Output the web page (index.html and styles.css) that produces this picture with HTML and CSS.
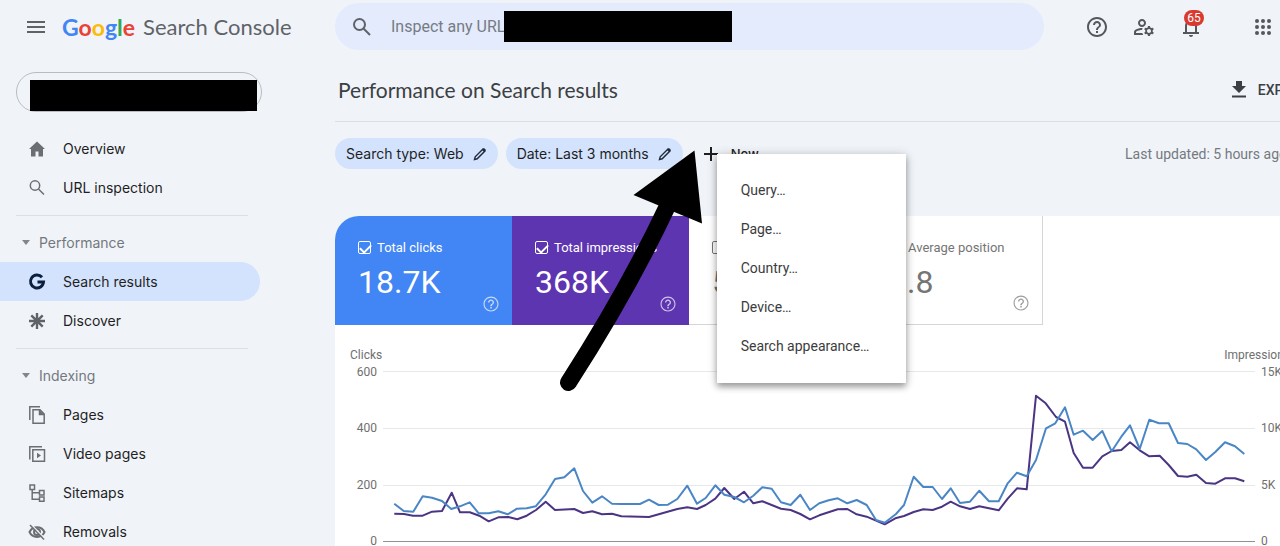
FILE: index.html
```html
<!DOCTYPE html>
<html lang="en">
<head>
    <meta charset="UTF-8">
    <meta name="viewport" content="width=device-width, initial-scale=1.0">
    <title>Performance on Search results</title>
    <link rel="stylesheet" href="styles.css">
</head>
<body>
    <header class="topbar">
        <div class="brand">
            <button class="icon-btn menu-btn" aria-label="Main menu">
                <svg width="18" height="12" viewBox="0 0 18 12"><path d="M0 1h18M0 6h18M0 11h18" stroke="#5f6368" stroke-width="2"/></svg>
            </button>
            <a class="logo" href="#"><span class="google"><span class="blue">G</span><span class="red">o</span><span class="yellow">o</span><span class="blue">g</span><span class="green">l</span><span class="red">e</span></span> <span class="product">Search Console</span></a>
        </div>

        <form class="search">
            <svg width="20" height="20" viewBox="0 0 20 20" fill="none" stroke="#5f6368" stroke-width="2"><circle cx="7.5" cy="7.5" r="5.5"/><path d="M11.5 11.5L18 18"/></svg>
            <input type="text" placeholder="Inspect any URL" aria-label="Inspect any URL">
            <span class="redacted"></span>
        </form>

        <div class="actions">
            <button class="icon-btn" aria-label="Help">
                <svg width="24" height="24" viewBox="0 0 24 24" fill="#54585d"><path d="M11 18h2v-2h-2v2zm1-16C6.48 2 2 6.48 2 12s4.48 10 10 10 10-4.48 10-10S17.52 2 12 2zm0 18c-4.41 0-8-3.59-8-8s3.59-8 8-8 8 3.59 8 8-3.59 8-8 8zm0-14c-2.21 0-4 1.79-4 4h2c0-1.1.9-2 2-2s2 .9 2 2c0 2-3 1.75-3 5h2c0-2.25 3-2.5 3-5 0-2.21-1.79-4-4-4z"/></svg>
            </button>
            <button class="icon-btn" aria-label="User settings">
                <svg width="24" height="24" viewBox="0 0 24 24" fill="#54585d"><path d="M4 18v-.65c0-.34.16-.66.41-.81C6.1 15.53 8.03 15 10 15c.03 0 .05 0 .08.01.1-.7.3-1.37.59-1.98-.22-.02-.44-.03-.67-.03-2.42 0-4.68.67-6.61 1.82-.88.52-1.39 1.5-1.39 2.53V20h9.26c-.42-.6-.75-1.28-.97-2H4zM10 12c2.21 0 4-1.79 4-4s-1.79-4-4-4-4 1.79-4 4 1.79 4 4 4zm0-6c1.1 0 2 .9 2 2s-.9 2-2 2-2-.9-2-2 .9-2 2-2zM20.75 16c0-.22-.03-.42-.06-.63l1.14-1.01-1-1.73-1.45.49c-.32-.27-.68-.48-1.08-.63L18 11h-2l-.3 1.49c-.4.15-.76.36-1.08.63l-1.45-.49-1 1.73 1.14 1.01c-.03.21-.06.41-.06.63s.03.42.06.63l-1.14 1.01 1 1.73 1.45-.49c.32.27.68.48 1.08.63L16 21h2l.3-1.49c.4-.15.76-.36 1.08-.63l1.45.49 1-1.73-1.14-1.01c.03-.21.06-.41.06-.63zM17 18c-1.1 0-2-.9-2-2s.9-2 2-2 2 .9 2 2-.9 2-2 2z"/></svg>
            </button>
            <button class="icon-btn bell" aria-label="Notifications">
                <svg width="24" height="24" viewBox="0 0 24 24" fill="#54585d"><path d="M12 22c1.1 0 2-.9 2-2h-4c0 1.1.9 2 2 2zm6-5v-6c0-3.07-1.63-5.64-4.5-6.32V4c0-.83-.67-1.5-1.5-1.5s-1.5.67-1.5 1.5v.68C7.64 5.36 6 7.92 6 11v6H4v2h16v-2h-2zm-2 0H8v-6c0-2.48 1.51-4.5 4-4.5s4 2.02 4 4.5v6z"/></svg>
                <span class="badge">65</span>
            </button>
            <button class="icon-btn apps" aria-label="Google apps">
                <svg width="16" height="16" viewBox="0 0 16 16" fill="#54585d"><circle cx="2" cy="2" r="2"/><circle cx="8" cy="2" r="2"/><circle cx="14" cy="2" r="2"/><circle cx="2" cy="8" r="2"/><circle cx="8" cy="8" r="2"/><circle cx="14" cy="8" r="2"/><circle cx="2" cy="14" r="2"/><circle cx="8" cy="14" r="2"/><circle cx="14" cy="14" r="2"/></svg>
            </button>
        </div>
    </header>

    <div class="layout">
        <aside class="sidebar">
            <button class="property" aria-label="Property"><span class="redacted"></span></button>

            <nav>
                <a class="nav-item" href="#">
                    <svg viewBox="0 0 18 18" fill="#6b6f73"><path d="M9 1.5L1 9h2v7.500h4.500v-5h3v5H15V9h2z"/></svg>
                    Overview
                </a>
                <a class="nav-item" href="#">
                    <svg viewBox="0 0 18 18" fill="none" stroke="#6b6f73" stroke-width="1.500"><circle cx="7" cy="6.500" r="4.700"/><path d="M10.500 10L16 15.500"/></svg>
                    URL inspection
                </a>
                <hr>
                <button class="nav-section"><span class="caret"></span>Performance</button>
                <a class="nav-item active" href="#">
                    <svg viewBox="0 0 18 18" fill="none" stroke="#0b1f3f" stroke-width="3"><path d="M14 4.300A6.500 6.500 0 1 0 15.500 9H9.500"/></svg>
                    Search results
                </a>
                <a class="nav-item" href="#">
                    <svg viewBox="0 0 18 18" stroke="#5f6368" stroke-width="2.400"><path d="M9 1v16M1 9h16M3.300 3.300l11.400 11.400M14.700 3.300L3.300 14.700"/></svg>
                    Discover
                </a>
                <hr>
                <button class="nav-section"><span class="caret"></span>Indexing</button>
                <a class="nav-item" href="#">
                    <svg viewBox="0 0 18 18" fill="none" stroke="#6b6f73" stroke-width="1.500"><path d="M1.800 14V.8H12M5 3.800h7l4.200 4.200v9.300H5z"/><path d="M11.500 4v4.500H16" fill="#6b6f73"/></svg>
                    Pages
                </a>
                <a class="nav-item" href="#">
                    <svg viewBox="0 0 18 18" fill="none" stroke="#6b6f73" stroke-width="1.500"><path d="M1.800 14.500V1.800H14M4.800 4.800h11.700v11.400H4.800z"/><path d="M9 7.800v5.400l4-2.700z" fill="#6b6f73" stroke="none"/></svg>
                    Video pages
                </a>
                <a class="nav-item" href="#">
                    <svg viewBox="0 0 18 18" fill="none" stroke="#6b6f73" stroke-width="1.500"><path d="M2 1h4.500v4.500H2zM11.500 6.500H16V11h-4.500zM11.500 13H16v4.300h-4.500zM4.200 5.500v9.700h7.300M4.200 8.700h7.300"/></svg>
                    Sitemaps
                </a>
                <a class="nav-item" href="#">
                    <svg viewBox="0 0 18 18" fill="none" stroke="#6b6f73"><path d="M1.500 9C4.500 2.500 13.500 2.500 16.500 9 13.500 15.500 4.500 15.500 1.500 9z" stroke-width="2"/><circle cx="9" cy="9" r="3" stroke-width="2"/><path d="M3.500 2L17 15.500" stroke="#f0f4f9" stroke-width="1.500"/><path d="M2 2l14 14.500" stroke-width="1.500"/></svg>
                    Removals
                </a>
            </nav>
        </aside>

        <main class="main">
            <div class="title-row">
                <h1>Performance on Search results</h1>
                <button class="export">
                    <svg width="16" height="17" viewBox="0 0 16 17" fill="#3c4043"><path d="M5 0h6v5h4l-7 7-7-7h4zM1 14.500h14v2H1z"/></svg>
                    EXPORT
                </button>
            </div>

            <div class="filters">
                <button class="chip">Search type: Web
                    <svg width="14" height="14" viewBox="0 0 14 14"><path d="M1.500 12.500l.7-2.700L10 2l2 2-7.800 7.800z" fill="none" stroke="#1f2a3d" stroke-width="1.400"/><path d="M9 3l2-2 2 2-2 2z" fill="#1f2a3d"/></svg>
                </button>
                <button class="chip">Date: Last 3 months
                    <svg width="14" height="14" viewBox="0 0 14 14"><path d="M1.500 12.500l.7-2.700L10 2l2 2-7.800 7.800z" fill="none" stroke="#1f2a3d" stroke-width="1.400"/><path d="M9 3l2-2 2 2-2 2z" fill="#1f2a3d"/></svg>
                </button>
                <div class="new-filter">
                    <button class="new-btn">
                        <svg width="14" height="14" viewBox="0 0 14 14"><path d="M7 0v14M0 7h14" stroke="#1f1f1f" stroke-width="2"/></svg>
                        New
                    </button>
                    <div class="menu" role="menu">
                        <button role="menuitem">Query…</button>
                        <button role="menuitem">Page…</button>
                        <button role="menuitem">Country…</button>
                        <button role="menuitem">Device…</button>
                        <button role="menuitem">Search appearance…</button>
                    </div>
                </div>
                <span class="updated">Last updated: 5 hours ago</span>
            </div>

            <section class="card">
                <div class="metrics">
                    <div class="metric clicks">
                        <label><input type="checkbox" checked> Total clicks</label>
                        <div class="value">18.7K</div>
                        <svg class="help" viewBox="0 0 24 24"><path d="M11 18h2v-2h-2v2zm1-16C6.480 2 2 6.480 2 12s4.480 10 10 10 10-4.480 10-10S17.520 2 12 2zm0 18.500c-4.700 0-8.500-3.800-8.500-8.500S7.300 3.500 12 3.500s8.500 3.800 8.500 8.500-3.800 8.500-8.500 8.500zM12 6c-2.210 0-4 1.790-4 4h1.800c0-1.200 1-2.200 2.200-2.200s2.200 1 2.200 2.200c0 2-3.200 1.750-3.200 5h2c0-2.250 3-2.500 3-5 0-2.210-1.790-4-4-4z"/></svg>
                    </div>
                    <div class="metric impressions">
                        <label><input type="checkbox" checked> Total impressions</label>
                        <div class="value">368K</div>
                        <svg class="help" viewBox="0 0 24 24"><path d="M11 18h2v-2h-2v2zm1-16C6.480 2 2 6.480 2 12s4.480 10 10 10 10-4.480 10-10S17.520 2 12 2zm0 18.500c-4.700 0-8.500-3.800-8.500-8.500S7.300 3.500 12 3.500s8.500 3.800 8.500 8.500-3.800 8.500-8.500 8.500zM12 6c-2.210 0-4 1.790-4 4h1.800c0-1.200 1-2.200 2.200-2.200s2.200 1 2.200 2.200c0 2-3.200 1.750-3.200 5h2c0-2.250 3-2.500 3-5 0-2.210-1.790-4-4-4z"/></svg>
                    </div>
                    <div class="metric">
                        <label><input type="checkbox"> Average CTR</label>
                        <div class="value">5.1%</div>
                    </div>
                    <div class="metric">
                        <label><input type="checkbox"> Average position</label>
                        <div class="value">9.8</div>
                        <svg class="help" viewBox="0 0 24 24"><path d="M11 18h2v-2h-2v2zm1-16C6.480 2 2 6.480 2 12s4.480 10 10 10 10-4.480 10-10S17.520 2 12 2zm0 18.500c-4.700 0-8.500-3.800-8.500-8.500S7.300 3.500 12 3.500s8.500 3.800 8.500 8.500-3.800 8.500-8.500 8.500zM12 6c-2.210 0-4 1.790-4 4h1.800c0-1.200 1-2.200 2.200-2.200s2.200 1 2.200 2.200c0 2-3.200 1.750-3.200 5h2c0-2.250 3-2.500 3-5 0-2.210-1.790-4-4-4z"/></svg>
                    </div>
                </div>

                <div class="chart">
                    <div class="axis-titles"><span>Clicks</span><span>Impressions</span></div>
                    <div class="plot">
                        <div class="axis left"><span>600</span><span>400</span><span>200</span><span>0</span></div>
                        <svg class="lines" viewBox="383 371 872 171" preserveAspectRatio="none" fill="none">
                            <path d="M383 371.500h872M383 428.500h872M383 485.500h872" stroke="#e6e8ea"/>
                            <path d="M383 541.500h872" stroke="#8f9194"/>
                            <polyline class="impressions-line" points="394.300,513.700 404,514 413,515.700 422.700,515.700 432,511.700 442,511 451.700,492.700 460,512.300 469.700,512.300 479.300,515.700 488.700,521.300 498.300,517.300 508.300,517 517.300,519.300 526.700,515.700 536,510 545.700,501.700 555,510 574.300,509 583,513 592.300,511.300 602,514.300 612,513.700 621.300,516.300 640,516.700 649,517 677.300,509 687.300,507.300 697,509 705.700,505 715.300,498.700 724.300,488 734.300,499 744,491.700 753.300,503.300 762.300,501.300 781,508.700 790.700,510 800.300,514 810,519.300 819.300,515.300 837.700,509.300 847.300,509 856.700,514.300 866.700,516.700 884.700,524.300 895.300,518.300 904,516 913.700,512 923.300,509.300 932.700,510 942,506.700 950.700,501.700 960,506.300 970,509 979.300,506.300 998.700,510.300 1007.700,498.700 1017,488.300 1026.700,489.300 1036,395.700 1045.700,403.300 1056,417 1065,421.700 1073.700,453 1083,467.700 1092.700,467.700 1102.300,456.300 1111.700,451 1121.300,450 1130,442.300 1139.700,450.300 1149.300,456.300 1159.700,455.700 1168.700,465 1178,476 1187.300,476.700 1196.300,474.700 1206,483 1215.300,483.700 1225,478.300 1235,478.300 1244.300,481.300"/>
                            <polyline class="clicks-line" points="394.300,503.700 403.700,511 413.300,511.700 422.700,496.300 432,497.700 442,501 451.300,509 460,506.300 469.700,502.300 478.700,513.300 488.700,513.300 498.300,511.300 507.700,514.300 517,508.700 526.700,508.300 535.700,506.300 545.700,494.300 555,479 564.300,477.300 574.300,468.300 583,491 592.300,502.700 602,496.300 612,503.700 621.300,504 640,504 649,499.700 658.700,505 668,504.700 677.300,499 687.300,485.700 697,503.700 705.700,498 715.300,485.300 724.300,494.700 734.300,497 744,502.300 753.300,495.700 762.300,487.300 771.700,488.700 781,502.300 790.700,505 800.300,494.700 810,510 819.300,503.300 828.700,500.300 837.700,498.300 847.300,503.300 856.700,500 866.700,505 876,520 884.700,522.700 896,514 904,505 913.700,476.700 923.300,487 932.700,487 942,499 950.700,488.300 960,503 970,501.700 979.300,490.700 989,501.300 998.700,501.300 1007.700,483.300 1017,472.700 1026.700,476.300 1036,460 1046,428.300 1055.300,423.300 1065,407.300 1073.700,434.700 1083,430.700 1092.700,440 1102.300,431 1111.700,451.300 1121.300,436.700 1130,425.300 1139.700,449 1149.300,419.700 1159,423.300 1168.700,423.300 1178,443 1187.300,444 1196.300,449.300 1206,460 1215.300,452 1225,442.300 1235,446.300 1244.300,454"/>
                        </svg>
                        <div class="axis right"><span>15K</span><span>10K</span><span>5K</span><span>0</span></div>
                    </div>
                </div>
            </section>

            <!-- pointer to the New filter menu -->
            <svg class="arrow" width="150" height="246" viewBox="556 148 150 246">
                <path d="M568.500 382.500Q628 290 667 207" fill="none" stroke="#000" stroke-width="17" stroke-linecap="round"/>
                <path d="M694.500 150.500L702 223.500 633.500 195z"/>
            </svg>
        </main>
    </div>
</body>
</html>
```

FILE: styles.css
```css
* {
    margin: 0;
    padding: 0;
    box-sizing: border-box;
}

body {
    font-family: Roboto, Arial, sans-serif;
    background: #f0f4f9;
    color: #1f1f1f;
    min-height: 100vh;
    overflow: hidden;
}

button {
    font: inherit;
    color: inherit;
    background: none;
    border: none;
    cursor: pointer;
}

a {
    color: inherit;
    text-decoration: none;
}

.redacted {
    display: block;
    background: #000;
}

/* top bar */
.topbar {
    display: flex;
    align-items: center;
    height: 53px;
    padding-right: 9px;
}

.brand {
    display: flex;
    align-items: center;
    flex: 0 0 335px;
    padding-left: 27px;
    gap: 17px;
}

.icon-btn {
    display: flex;
    align-items: center;
    justify-content: center;
}

.logo {
    display: flex;
    align-items: center;
    gap: 8px;
    font-family: Lato, sans-serif;
    font-size: 22px;
    color: #5f6368;
}

.google {
    font-size: 23px;
    font-weight: 700;
}

.blue { color: #4285f4; }
.red { color: #ea4335; }
.yellow { color: #fbbc05; }
.green { color: #34a853; }

.search {
    position: relative;
    display: flex;
    align-items: center;
    flex: 1;
    height: 47px;
    padding-left: 17px;
    gap: 19px;
    border-radius: 24px;
    background: #e3ebfc;
}

.search input {
    flex: 1;
    border: none;
    outline: none;
    background: none;
    font: 16px Roboto, Arial, sans-serif;
}

.search input::placeholder {
    color: #767b84;
}

.search .redacted {
    position: absolute;
    left: 169px;
    top: 8px;
    width: 228px;
    height: 31px;
}

.actions {
    display: flex;
    align-items: center;
    gap: 23px;
    padding-left: 41px;
}

.bell {
    position: relative;
}

.badge {
    position: absolute;
    left: 5px;
    top: -5px;
    min-width: 20px;
    padding: 0 3px;
    border-radius: 8px;
    background: #d93a2f;
    color: #fff;
    font-size: 12px;
    line-height: 16px;
}

.apps {
    padding-left: 29px;
}

/* sidebar */
.layout {
    display: flex;
}

.sidebar {
    flex: 0 0 335px;
    padding-top: 19px;
}

.property {
    display: block;
    width: 246px;
    height: 40px;
    margin: 0 0 17px 16px;
    padding: 7px 4px 0 13px;
    border: 1px solid #b9bdc2;
    border-radius: 20px;
}

.property .redacted {
    height: 31px;
}

.nav-item,
.nav-section {
    display: flex;
    align-items: center;
    width: 260px;
    height: 39px;
    font-family: Inter, sans-serif;
    font-size: 14px;
}

.nav-item {
    gap: 17px;
    padding-left: 28px;
    border-radius: 0 20px 20px 0;
}

.nav-item svg {
    width: 18px;
    height: 18px;
}

.nav-item.active {
    background: #d3e3fd;
}

.nav-section {
    gap: 9px;
    padding-left: 22px;
    color: #74787d;
}

.caret {
    border: 4px solid transparent;
    border-top: 5px solid #80868b;
    border-bottom: none;
}

.sidebar hr {
    width: 232px;
    margin: 8px 0 7px 16px;
    border: none;
    border-top: 1px solid #dcdfe4;
}

/* main column, runs past the right edge of the window */
.main {
    position: relative;
    flex: 1;
    min-width: 0;
    margin-right: -40px;
    white-space: nowrap;
}

.title-row {
    display: flex;
    align-items: center;
    justify-content: space-between;
    height: 69px;
    padding: 5px 10px 0 3px;
    border-bottom: 1px solid #dcdfe4;
}

h1 {
    font-family: Lato, sans-serif;
    font-size: 21px;
    font-weight: 400;
    color: #3c4043;
}

.export {
    display: flex;
    align-items: center;
    gap: 11px;
    font-size: 14px;
    font-weight: 500;
    color: #3c4043;
}

.filters {
    display: flex;
    align-items: center;
    gap: 8px;
    height: 94px;
    padding-bottom: 31px;
}

.chip {
    display: flex;
    align-items: center;
    gap: 9px;
    height: 31px;
    padding: 0 11px;
    border-radius: 16px;
    background: #d3e3fd;
    font-family: Inter, sans-serif;
    font-size: 14px;
}

.new-filter {
    position: relative;
    padding-left: 13px;
}

.new-btn {
    display: flex;
    align-items: center;
    gap: 13px;
    font-family: Inter, sans-serif;
    font-size: 13px;
    font-weight: 500;
}

.menu {
    position: absolute;
    z-index: 1;
    left: 26px;
    top: 8px;
    width: 189px;
    padding: 17px 0;
    background: #fff;
    box-shadow: 0 4px 6px rgba(0,0,0,0.3), 0 1px 10px rgba(0,0,0,0.2);
}

.menu button {
    display: block;
    width: 100%;
    height: 39px;
    padding-left: 24px;
    text-align: left;
    font-size: 14px;
    color: #3c3c3c;
}

.updated {
    margin-left: auto;
    padding-right: 33px;
    font-size: 14px;
    color: #75797e;
}

/* metrics and chart */
.card {
    background: #fff;
    border-top-left-radius: 24px;
    overflow: hidden;
}

.metrics {
    display: flex;
}

.metric {
    position: relative;
    width: 177px;
    height: 109px;
    padding: 22px 23px;
    border-right: 1px solid #d5d5d5;
    border-bottom: 1px solid #d5d5d5;
    color: #757575;
}

.metric.clicks,
.metric.impressions {
    border: none;
    color: #fff;
}

.metric.clicks { background: #4285f4; }
.metric.impressions { background: #5e35b1; }

.metric label {
    display: flex;
    align-items: center;
    gap: 6px;
    height: 18px;
    font-size: 13px;
}

.metric input {
    appearance: none;
    width: 13px;
    height: 13px;
    border: 1px solid currentColor;
    border-radius: 2px;
    color: inherit;
}

.metric input:checked::after {
    content: "";
    display: block;
    width: 9px;
    height: 5px;
    margin: 2px 1px;
    border-left: 2px solid #fff;
    border-bottom: 2px solid #fff;
    transform: rotate(-45deg);
}

.value {
    margin-top: 6px;
    font-size: 32px;
    line-height: 40px;
}

.help {
    position: absolute;
    right: 12px;
    bottom: 12px;
    width: 18px;
    height: 18px;
    fill: currentColor;
    opacity: 0.7;
}

.chart {
    padding: 22px 20px 20px 15px;
    font-size: 12px;
    color: #6f6f6f;
}

.axis-titles {
    display: flex;
    justify-content: space-between;
    padding-right: 10px;
    line-height: 16px;
}

.plot {
    display: flex;
    margin-top: 1px;
}

.axis {
    display: flex;
    flex-direction: column;
    justify-content: space-between;
    height: 185px;
    line-height: 16px;
}

.axis.left {
    width: 27px;
    text-align: right;
}

.axis.right {
    width: 39px;
}

.lines {
    flex: 1;
    min-width: 0;
    height: 171px;
    margin: 7px 6px 0;
}

.lines polyline {
    stroke-width: 2;
    stroke-linejoin: round;
}

.clicks-line { stroke: #4a86c5; }
.impressions-line { stroke: #4b3583; }

.arrow {
    position: absolute;
    z-index: 2;
    left: 221px;
    top: 95px;
}
```
